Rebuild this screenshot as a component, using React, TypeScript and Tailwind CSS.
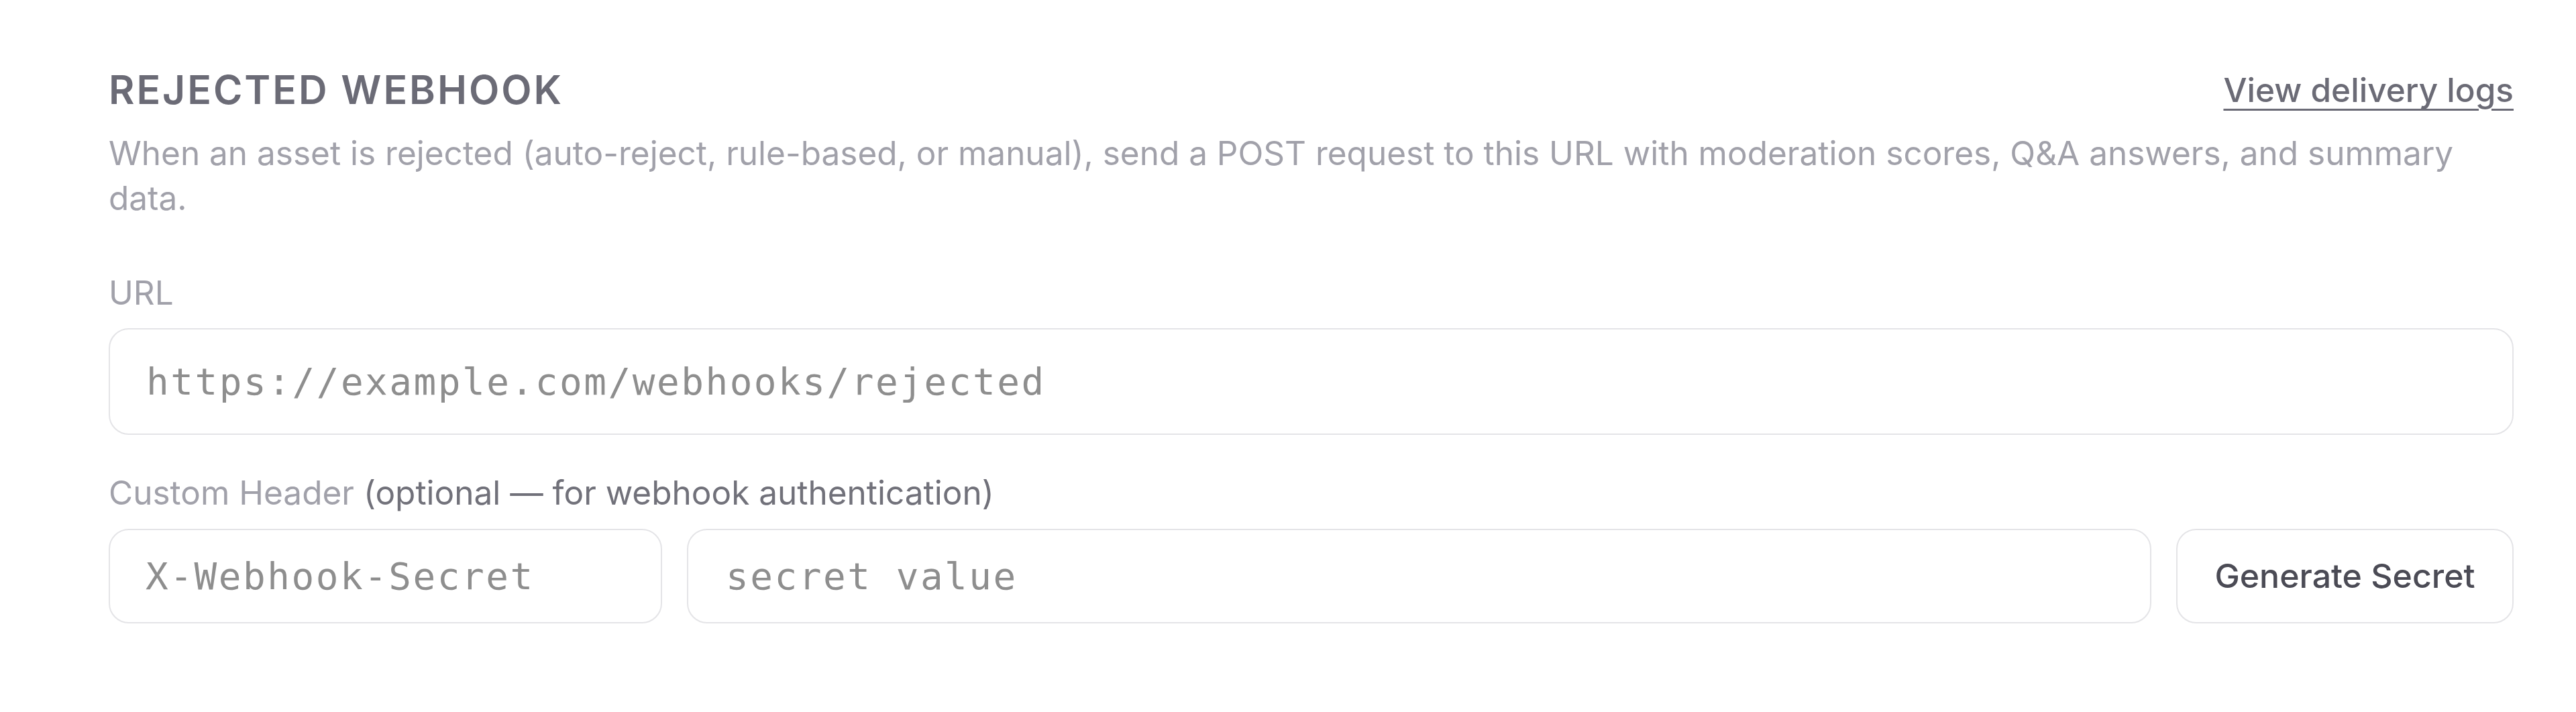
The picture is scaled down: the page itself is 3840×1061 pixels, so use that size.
import React from "react";

export default function App() {
  return (
    <div className="w-full h-[1061px] bg-white font-['Inter',sans-serif] pt-[98px] pl-[162px] pr-[93px]">
      <div className="flex items-center justify-between h-[72px]">
        <h2 className="text-[59px] leading-[72px] font-semibold tracking-[0.05em] text-[#6b6b76] uppercase">
          Rejected Webhook
        </h2>
        <a
          href="#"
          className="text-[49.5px] leading-[60px] font-medium text-[#6b6b76] underline decoration-[3px] underline-offset-[10px]"
        >
          View delivery logs
        </a>
      </div>
      <p className="mt-[25px] text-[49.5px] leading-[66.5px] text-[#a1a1aa]">
        When an asset is rejected (auto-reject, rule-based, or manual), send a POST request to this URL with moderation scores, Q&amp;A answers, and summary data.
      </p>
      <div className="mt-[78px] text-[49.5px] leading-[60px] text-[#a1a1aa]">URL</div>
      <input
        type="text"
        placeholder="https://example.com/webhooks/rejected"
        className="mt-[23px] block w-full h-[159px] rounded-[30px] border-2 border-[#e4e4e7] bg-white px-[54px] font-['DejaVu_Sans_Mono',monospace] text-[56px] tracking-[0.045em] text-[#3f3f46] placeholder:text-[#8e8e8e] outline-none"
      />
      <div className="mt-[56px] text-[49.5px] leading-[60px] text-[#a1a1aa]">
        Custom Header <span className="text-[#71717a]">(optional — for webhook authentication)</span>
      </div>
      <div className="mt-[24px] flex gap-[37px] h-[141px]">
        <input
          type="text"
          placeholder="X-Webhook-Secret"
          className="w-[825px] shrink-0 h-full rounded-[30px] border-2 border-[#e4e4e7] bg-white px-[53px] font-['DejaVu_Sans_Mono',monospace] text-[56px] tracking-[0.045em] text-[#3f3f46] placeholder:text-[#8e8e8e] outline-none"
        />
        <input
          type="text"
          placeholder="secret value"
          className="flex-1 min-w-0 h-full rounded-[30px] border-2 border-[#e4e4e7] bg-white px-[56px] font-['DejaVu_Sans_Mono',monospace] text-[56px] tracking-[0.045em] text-[#3f3f46] placeholder:text-[#8e8e8e] outline-none"
        />
        <button
          type="button"
          className="w-[503px] shrink-0 h-full rounded-[30px] border-2 border-[#e4e4e7] bg-white text-[50px] font-medium text-[#4b4b55]"
        >
          Generate Secret
        </button>
      </div>
    </div>
  );
}
